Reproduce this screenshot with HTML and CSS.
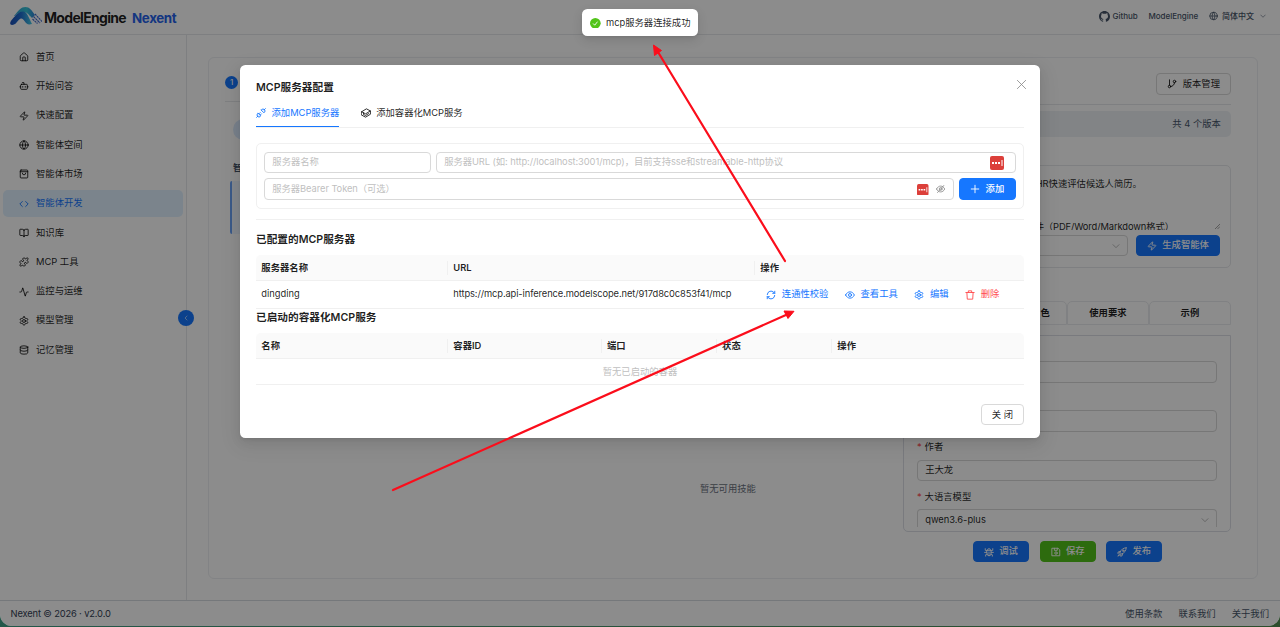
FILE: index.html
```html
<!DOCTYPE html>
<html lang="zh-CN">
  <head>
    <meta charset="UTF-8" />
    <title>Nexent</title>
    <link rel="stylesheet" href="styles.css">
  </head>
  <body>
    <!-- Icon sprite -->
    <svg class="sprite">
      <symbol id="home" viewBox="0 0 24 24"><path d="M15 21v-8a1 1 0 0 0-1-1h-4a1 1 0 0 0-1 1v8"/><path d="M3 10a2 2 0 0 1 .7-1.5l7-6a2 2 0 0 1 2.6 0l7 6A2 2 0 0 1 21 10v9a2 2 0 0 1-2 2H5a2 2 0 0 1-2-2z"/></symbol>
      <symbol id="bot" viewBox="0 0 24 24"><path d="M12 8V4H8M2 14h2M20 14h2M15 13v2M9 13v2"/><rect x="4" y="8" width="16" height="12" rx="2"/></symbol>
      <symbol id="zap" viewBox="0 0 24 24"><path d="M4 14a1 1 0 0 1-.8-1.6l9.900-10.200a.5.5 0 0 1 .9.5l-2 6A1 1 0 0 0 13 10h7a1 1 0 0 1 .8 1.600l-9.900 10.200a.5.5 0 0 1-.9-.5l2-6A1 1 0 0 0 11 14z"/></symbol>
      <symbol id="globe" viewBox="0 0 24 24"><circle cx="12" cy="12" r="10"/><path d="M12 2a14.5 14.5 0 0 0 0 20 14.5 14.5 0 0 0 0-20M2 12h20"/></symbol>
      <symbol id="bag" viewBox="0 0 24 24"><rect x="3" y="2.5" width="18" height="19" rx="2"/><path d="M3 6.5h18M16 10a4 4 0 0 1-8 0"/></symbol>
      <symbol id="code" viewBox="0 0 24 24"><path d="m16 18 6-6-6-6M8 6l-6 6 6 6"/></symbol>
      <symbol id="book" viewBox="0 0 24 24"><path d="M12 7v14M3 18a1 1 0 0 1-1-1V4a1 1 0 0 1 1-1h5a4 4 0 0 1 4 4 4 4 0 0 1 4-4h5a1 1 0 0 1 1 1v13a1 1 0 0 1-1 1h-6a3 3 0 0 0-3 3 3 3 0 0 0-3-3z"/></symbol>
      <symbol id="puzzle" viewBox="0 0 24 24"><path d="M15.39 4.39a1 1 0 0 0 1.68-.474 2.5 2.5 0 1 1 3.014 3.015 1 1 0 0 0-.474 1.68l1.683 1.682a2.414 2.414 0 0 1 0 3.414L19.61 15.39a1 1 0 0 1-1.68-.474 2.5 2.5 0 1 0-3.014 3.015 1 1 0 0 1 .474 1.68l-1.683 1.682a2.414 2.414 0 0 1-3.414 0L8.61 19.61a1 1 0 0 0-1.68.474 2.5 2.5 0 1 1-3.014-3.015 1 1 0 0 0 .474-1.68l-1.683-1.682a2.414 2.414 0 0 1 0-3.414L4.39 8.61a1 1 0 0 1 1.68.474 2.5 2.5 0 1 0 3.014-3.015 1 1 0 0 1-.474-1.68l1.683-1.682a2.414 2.414 0 0 1 3.414 0z"/></symbol>
      <symbol id="activity" viewBox="0 0 24 24"><path d="M22 12h-2.500a2 2 0 0 0-1.900 1.500l-2.400 8.300a.25.25 0 0 1-.4 0L9.200 2.200a.25.25 0 0 0-.4 0l-2.400 8.300A2 2 0 0 1 4.500 12H2"/></symbol>
      <symbol id="settings" viewBox="0 0 24 24"><path d="M12.22 2h-.44a2 2 0 0 0-2 2v.18a2 2 0 0 1-1 1.73l-.43.25a2 2 0 0 1-2 0l-.15-.08a2 2 0 0 0-2.73.73l-.22.38a2 2 0 0 0 .73 2.73l.15.1a2 2 0 0 1 1 1.72v.51a2 2 0 0 1-1 1.74l-.15.09a2 2 0 0 0-.73 2.73l.22.38a2 2 0 0 0 2.73.73l.15-.08a2 2 0 0 1 2 0l.43.25a2 2 0 0 1 1 1.73V20a2 2 0 0 0 2 2h.44a2 2 0 0 0 2-2v-.18a2 2 0 0 1 1-1.73l.43-.25a2 2 0 0 1 2 0l.15.08a2 2 0 0 0 2.73-.73l.22-.39a2 2 0 0 0-.73-2.73l-.15-.08a2 2 0 0 1-1-1.74v-.5a2 2 0 0 1 1-1.74l.15-.09a2 2 0 0 0 .73-2.73l-.22-.38a2 2 0 0 0-2.73-.73l-.15.08a2 2 0 0 1-2 0l-.43-.25a2 2 0 0 1-1-1.73V4a2 2 0 0 0-2-2z"/><circle cx="12" cy="12" r="3.5"/></symbol>
      <symbol id="database" viewBox="0 0 24 24"><ellipse cx="12" cy="5" rx="9" ry="3"/><path d="M3 5v14a9 3 0 0 0 18 0V5M3 12a9 3 0 0 0 18 0"/></symbol>
      <symbol id="github" viewBox="0 0 16 16"><path d="M8 0C3.58 0 0 3.58 0 8c0 3.54 2.29 6.53 5.47 7.59.4.07.55-.17.55-.38 0-.19-.01-.82-.01-1.49-2.01.37-2.53-.49-2.69-.94-.09-.23-.48-.94-.82-1.13-.28-.15-.68-.52-.01-.53.63-.01 1.08.58 1.23.82.72 1.21 1.87.87 2.33.66.07-.52.28-.87.51-1.07-1.78-.2-3.64-.89-3.64-3.95 0-.87.31-1.59.82-2.15-.08-.2-.36-1.02.08-2.12 0 0 .67-.21 2.2.82.64-.18 1.32-.27 2-.27s1.36.09 2 .27c1.53-1.04 2.2-.82 2.2-.82.44 1.1.16 1.92.08 2.12.51.56.82 1.27.82 2.15 0 3.07-1.87 3.75-3.65 3.95.29.25.54.73.54 1.48 0 1.07-.01 1.93-.01 2.2 0 .21.15.46.55.38A8.01 8.01 0 0 0 16 8c0-4.42-3.58-8-8-8z" fill="currentColor" stroke="none"/></symbol>
      <symbol id="down" viewBox="0 0 24 24"><path d="m3 8 9 9 9-9"/></symbol>
      <symbol id="left" viewBox="0 0 24 24"><path d="m16 4-8 8 8 8"/></symbol>
      <symbol id="close" viewBox="0 0 24 24"><path d="m3 3 18 18M21 3 3 21"/></symbol>
      <symbol id="plus" viewBox="0 0 24 24"><path d="M12 3v18M3 12h18"/></symbol>
      <symbol id="branch" viewBox="0 0 24 24"><path d="M6 2v13M18 9a9 9 0 0 1-9 9"/><circle cx="6" cy="18" r="3"/><circle cx="18" cy="6" r="3"/></symbol>
      <symbol id="plug" viewBox="0 0 24 24"><path d="m1.500 22.500 3-3M22.500 1.500l-3 3M10 11l-2.500 2.500M13 14l-2.500 2.500M5 12.500l6.500 6.500-1.500 1.500a4 4 0 0 1-5.500 0l-1-1a4 4 0 0 1 0-5.500zM12.500 5l6.500 6.500 1.500-1.500a4 4 0 0 0 0-5.500l-1-1a4 4 0 0 0-5.500 0z"/></symbol>
      <symbol id="box" viewBox="0 0 24 24"><path d="M1.500 9 13 2l9.500 5v8L11 22l-9.500-5zM1.500 9 11 14l11.500-7M6 11.500v4l5 2.500 7-4.500"/></symbol>
      <symbol id="sync" viewBox="0 0 24 24"><path d="M3 11a9 9 0 0 1 16-5l2 2M21 3v5h-5M21 13a9 9 0 0 1-16 5l-2-2M3 21v-5h5"/></symbol>
      <symbol id="eye" viewBox="0 0 24 24"><path d="M1.500 12C4 7 7.500 4.500 12 4.500S20 7 22.500 12C20 17 16.500 19.500 12 19.500S4 17 1.500 12z"/><circle cx="12" cy="12" r="3.6"/></symbol>
      <symbol id="eye-off" viewBox="0 0 24 24"><path d="M1.500 12C4 7 7.500 4.500 12 4.500S20 7 22.500 12C20 17 16.500 19.500 12 19.500S4 17 1.500 12zM4 21 20 3"/><circle cx="12" cy="12" r="3.6"/></symbol>
      <symbol id="trash" viewBox="0 0 24 24"><path d="M2 6h20M8 6V2h8v4M4.500 6l1 16h13l1-16"/></symbol>
      <symbol id="bug" viewBox="0 0 24 24"><path d="M7 8h10v8a5 5 0 0 1-10 0zM8 8a4 4 0 0 1 8 0M12 12v9M7 13H1.500M22.500 13H17M7 9 3 8V4M17 9l4-1V4M7.500 17 4 18.500V22M16.500 17l3.500 1.500V22"/></symbol>
      <symbol id="save" viewBox="0 0 24 24"><path d="M3 3h14l4 4v14H3zM8 3v5h7V3"/><circle cx="12" cy="14.5" r="3"/></symbol>
      <symbol id="rocket" viewBox="0 0 24 24"><path d="M22 2C15 2 10 6 7 13l4 4c7-3 11-8 11-15zM8 11H4l-2.500 4L7 14M13 16v4l-4 2.500V18M6 17l-4 5 5-3"/><circle cx="15" cy="9" r="1.8"/></symbol>
    </svg>

    <div class="window">
      <header class="topbar">
        <div class="brand">
          <svg class="logo" viewBox="0 0 32 19">
            <defs>
              <linearGradient id="sky"><stop offset="0" stop-color="#2f9fd0"/><stop offset=".6" stop-color="#35c4d8"/><stop offset="1" stop-color="#2f7fd8"/></linearGradient>
              <linearGradient id="sea"><stop offset="0" stop-color="#1d4fb8"/><stop offset=".5" stop-color="#1f6fd0"/><stop offset="1" stop-color="#45cbe6"/></linearGradient>
            </defs>
            <path d="M4 9C9 3 11 0 15.500 0c4 0 6 3 9.500 8l-3 3C18 7 17 5 13 5c-3 0-5 1-8 4z" fill="url(#sky)"/>
            <path d="M2.500 12C6 8 9 4.500 13 4.500c4 0 6 6.500 9 12.500-4 1-5.500 0-7.500-3-1.500-2-2.500-3-4.500-2-3 2-4 6-8 6-2 0-3-2 .5-6z" fill="url(#sea)"/>
            <path d="m25 7 7 7.500M23.500 9.500l6.500 6.500M22.500 12l5 4.500" stroke="#3d67c8" stroke-width="1.100" stroke-dasharray="2.200 .6"/>
          </svg>
          <span class="brand-name">ModelEngine</span>
          <span class="product">Nexent</span>
        </div>
        <nav class="top-links">
          <a class="github"><svg class="icon big"><use href="#github"/></svg>Github</a>
          <a>ModelEngine</a>
          <a class="lang"><svg class="icon"><use href="#globe"/></svg>简体中文<svg class="icon tiny"><use href="#down"/></svg></a>
        </nav>
      </header>

      <div class="main">
        <aside class="sidebar">
          <a class="menu-item"><svg class="icon"><use href="#home"/></svg>首页</a>
          <a class="menu-item"><svg class="icon"><use href="#bot"/></svg>开始问答</a>
          <a class="menu-item"><svg class="icon"><use href="#zap"/></svg>快速配置</a>
          <a class="menu-item"><svg class="icon"><use href="#globe"/></svg>智能体空间</a>
          <a class="menu-item"><svg class="icon"><use href="#bag"/></svg>智能体市场</a>
          <a class="menu-item active"><svg class="icon"><use href="#code"/></svg>智能体开发</a>
          <a class="menu-item"><svg class="icon"><use href="#book"/></svg>知识库</a>
          <a class="menu-item"><svg class="icon"><use href="#puzzle"/></svg>MCP 工具</a>
          <a class="menu-item"><svg class="icon"><use href="#activity"/></svg>监控与运维</a>
          <a class="menu-item"><svg class="icon"><use href="#settings"/></svg>模型管理</a>
          <a class="menu-item"><svg class="icon"><use href="#database"/></svg>记忆管理</a>
          <span class="collapse"><svg class="icon tiny"><use href="#left"/></svg></span>
        </aside>

        <div class="workspace">
          <section class="agents">
            <div class="step"><span class="step-no">1</span></div>
            <div class="avatar"></div>
            <div class="agents-title">智能体</div>
            <div class="agent-row"></div>
          </section>

          <section class="skills">暂无可用技能</section>

          <section class="detail">
            <div class="detail-head">
              <button class="btn"><svg class="icon"><use href="#branch"/></svg>版本管理</button>
            </div>
            <div class="versions">共 4 个版本</div>
            <div class="prompt">
              <div class="prompt-text">
                <p>帮助HR快速评估候选人简历。</p>
                <p>支持文件（PDF/Word/Markdown格式）</p>
                <svg class="grip" viewBox="0 0 6 6"><path d="M0 6 6 0M3 6l3-3"/></svg>
              </div>
              <div class="prompt-actions">
                <div class="field select"><svg class="icon"><use href="#down"/></svg></div>
                <button class="btn primary"><svg class="icon"><use href="#zap"/></svg>生成智能体</button>
              </div>
            </div>
            <div class="detail-tabs">
              <span>基础信息</span><span class="role">角色</span><span>使用要求</span><span>示例</span>
            </div>
            <div class="detail-form">
              <div class="field first"></div>
              <div class="field second"></div>
              <label><i>*</i>作者</label>
              <div class="field">王大龙</div>
              <label><i>*</i>大语言模型</label>
              <div class="field select">qwen3.6-plus<svg class="icon"><use href="#down"/></svg></div>
            </div>
            <div class="detail-actions">
              <button class="btn primary"><svg class="icon"><use href="#bug"/></svg>调试</button>
              <button class="btn success"><svg class="icon"><use href="#save"/></svg>保存</button>
              <button class="btn primary"><svg class="icon"><use href="#rocket"/></svg>发布</button>
            </div>
          </section>
        </div>
      </div>

      <footer class="footer">
        <span class="version">Nexent © 2026 · v2.0.0</span>
        <nav><a>使用条款</a><a>联系我们</a><a>关于我们</a></nav>
      </footer>
      <div class="mask"></div>
    </div>

    <!-- MCP config dialog -->
    <div class="modal">
      <div class="modal-head"><span>MCP服务器配置</span><svg class="icon close"><use href="#close"/></svg></div>
      <div class="tabs">
        <a class="tab on"><svg class="icon"><use href="#plug"/></svg>添加MCP服务器</a>
        <a class="tab"><svg class="icon"><use href="#box"/></svg>添加容器化MCP服务</a>
      </div>
      <div class="add-form">
        <div class="form-row">
          <div class="field name">服务器名称</div>
          <div class="field url">服务器URL (如: http://localhost:3001/mcp)，目前支持sse和streamable-http协议
            <svg class="pass" viewBox="0 0 14 14"><rect width="14" height="14" rx="2"/><path d="M2 6h2v2H2zM5 6h2v2H5zM8 6h2v2H8zM11.500 4h1v6h-1z"/></svg>
          </div>
        </div>
        <div class="form-row">
          <div class="field token">服务器Bearer Token（可选）
            <svg class="pass small" viewBox="0 0 14 14"><rect width="14" height="14" rx="2"/><path d="M2 6h2v2H2zM5 6h2v2H5zM8 6h2v2H8zM11.500 4h1v6h-1z"/></svg>
            <svg class="icon"><use href="#eye-off"/></svg>
          </div>
          <button class="btn primary"><svg class="icon"><use href="#plus"/></svg>添加</button>
        </div>
      </div>

      <h3 class="servers-title">已配置的MCP服务器</h3>
      <div class="grid servers thead"><span>服务器名称</span><span>URL</span><span>操作</span></div>
      <div class="grid servers row">
        <span>dingding</span>
        <span class="link">https://mcp.api-inference.modelscope.net/917d8c0c853f41/mcp</span>
        <div class="actions">
          <a><svg class="icon"><use href="#sync"/></svg>连通性校验</a>
          <a><svg class="icon"><use href="#eye"/></svg>查看工具</a>
          <a><svg class="icon"><use href="#settings"/></svg>编辑</a>
          <a class="danger"><svg class="icon"><use href="#trash"/></svg>删除</a>
        </div>
      </div>

      <h3 class="containers-title">已启动的容器化MCP服务</h3>
      <div class="grid containers thead"><span>名称</span><span>容器ID</span><span>端口</span><span>状态</span><span>操作</span></div>
      <div class="empty">暂无已启动的容器</div>
      <div class="modal-foot"><button class="btn">关 闭</button></div>
    </div>

    <div class="toast">
      <svg viewBox="0 0 12 12"><circle cx="6" cy="6" r="6"/><path d="m3.500 6.200 1.800 1.900 3.200-4"/></svg>mcp服务器连接成功
    </div>

    <!-- Annotation arrows -->
    <svg class="arrows" viewBox="0 0 1280 627">
      <path class="shaft" d="M785 261 658 52M393 490 787 314.500"/>
      <path class="head" d="m653.500 45 8 5.500-7 5zM794 311.300l-10-.3 4 7.500z"/>
    </svg>
  </body>
</html>
```

FILE: styles.css
```css
* {
  box-sizing: border-box;
}

body {
  margin: 0;
  height: 627px;
  overflow: hidden;
  font-family: Inter, "Noto Sans CJK SC", sans-serif;
  font-size: 9.33px;
  line-height: 14.67px;
  color: rgba(0, 0, 0, 0.88);
  background: linear-gradient(90deg, #23584a, #2c4d2c);
}

.sprite {
  display: none;
}

.icon {
  width: 10px;
  height: 10px;
  flex: none;
  fill: none;
  stroke: currentColor;
  stroke-width: 2.2;
  stroke-linecap: round;
  stroke-linejoin: round;
}

.icon.big {
  width: 11px;
  height: 11px;
}

.icon.tiny {
  width: 6px;
  height: 6px;
}

h3,
p {
  margin: 0;
}

.window {
  position: relative;
  height: 626px;
  display: flex;
  flex-direction: column;
  background: #fff;
  border-radius: 0 0 12px 12px;
  overflow: hidden;
}

/* Covers the whole app window while the dialog is open */
.mask {
  position: absolute;
  inset: 0;
  background: rgba(0, 0, 0, 0.45);
}

/* Top bar */
.topbar {
  height: 35px;
  flex: none;
  display: flex;
  justify-content: space-between;
  align-items: center;
  padding: 0 14px 1px 10px;
  border-bottom: 1px solid #e5e7eb;
}

.brand {
  display: flex;
  align-items: center;
}

.logo {
  width: 32px;
  height: 19px;
  fill: none;
  margin-bottom: 1px;
}

.brand-name {
  font-size: 14px;
  font-weight: 700;
  letter-spacing: -0.68px;
  margin: 3px 6px 0 2px;
}

.product {
  font-size: 13.33px;
  font-weight: 700;
  color: #2563eb;
  letter-spacing: -0.35px;
  margin-top: 3px;
}

.top-links {
  display: flex;
  gap: 10.7px;
  font-size: 8px;
  font-weight: 500;
  color: #475569;
}

.top-links a {
  display: flex;
  align-items: center;
  gap: 2px;
}

.top-links .lang {
  gap: 4px;
}

.top-links .lang .icon:first-child {
  width: 9px;
}

.top-links .lang .tiny {
  margin-left: 2px;
}

/* Sidebar */
.main {
  height: 565px;
  display: flex;
}

.sidebar {
  position: relative;
  width: 187px;
  flex: none;
  padding: 8.7px 3px 0;
  border-right: 1px solid #e5e7eb;
}

.menu-item {
  height: 26.67px;
  margin-bottom: 2.67px;
  padding-left: 16px;
  display: flex;
  align-items: center;
  gap: 7px;
  border-radius: 5px;
}

.menu-item.active {
  color: #1677ff;
  background: #e0f1ff;
}

.collapse {
  position: absolute;
  right: -8px;
  top: 275px;
  width: 16px;
  height: 16px;
  display: flex;
  align-items: center;
  justify-content: center;
  border-radius: 50%;
  background: #1677ff;
  color: #fff;
}

/* Workspace card */
.workspace {
  width: 1050px;
  height: 522px;
  margin: 22px 0 0 21.4px;
  display: flex;
  border: 1px solid #edeff2;
  border-radius: 6px;
}

.agents {
  width: 240px;
  padding: 18px 0 0 15.6px;
}

.step {
  height: 26px;
  border-bottom: 1px solid #e5e7eb;
}

.step-no {
  display: block;
  width: 13.33px;
  height: 13.33px;
  line-height: 13.33px;
  border-radius: 50%;
  text-align: center;
  font-size: 8px;
  font-weight: 500;
  color: #fff;
  background: #1677ff;
}

.avatar {
  width: 21px;
  height: 21px;
  margin: 16.5px 0 0 8px;
  border-radius: 50%;
  background: #dbeafe;
}

.agents-title {
  margin: 21px 0 0 8px;
  font-weight: 600;
  color: #475569;
}

.agent-row {
  height: 53px;
  margin: 6px 0 0 5px;
  border-left: 2.67px solid #6ba3f8;
  border-radius: 2px;
  background: #eff6ff;
}

.skills {
  flex: 1;
  padding: 424px 98px 0 0;
  text-align: right;
  color: #6b7280;
  margin-right: 49px;
}

/* Agent detail column */
.detail {
  width: 328px;
  margin-right: 26.5px;
  padding-top: 15.3px;
}

.detail-head {
  height: 32px;
  display: flex;
  justify-content: flex-end;
  border-bottom: 1px solid #e5e7eb;
}

.detail-head .btn {
  width: 74.5px;
}

.btn {
  height: 21.5px;
  padding: 0;
  display: inline-flex;
  align-items: center;
  justify-content: center;
  gap: 5.33px;
  font: inherit;
  line-height: 14.67px;
  white-space: nowrap;
  color: inherit;
  background: #fff;
  border: 1px solid #d9d9d9;
  border-radius: 4px;
}

.btn.primary,
.btn.success {
  color: #fff;
  font-weight: 500;
  background: #1677ff;
  border-color: #1677ff;
}

.btn.success {
  background: #52c41a;
  border-color: #52c41a;
}

.versions {
  height: 25.5px;
  margin-top: 6px;
  padding: 5.5px 10px;
  text-align: right;
  color: #475569;
  background: #edf1f5;
  border-radius: 5px;
}

.prompt {
  height: 103px;
  margin-top: 28px;
  padding: 5px 10px;
  border: 1px solid #e5e7eb;
  border-radius: 5px;
}

.prompt-text {
  position: relative;
  height: 59px;
  padding-top: 6px;
  overflow: hidden;
}

.prompt-text p {
  width: 228px;
  text-align: right;
}

.prompt-text p + p {
  width: 260px;
  margin-top: 28.5px;
  letter-spacing: -0.1px;
}

.grip {
  position: absolute;
  right: 0;
  bottom: 1px;
  width: 5px;
  height: 5px;
  stroke: #777;
  stroke-width: 0.8;
}

.prompt-actions {
  display: flex;
  gap: 8px;
  margin-top: 5px;
}

.prompt-actions .field {
  flex: 1;
}

.prompt-actions .btn {
  width: 84px;
}

.field {
  height: 21.5px;
  padding: 0 7.3px;
  display: flex;
  align-items: center;
  border: 1px solid #d9d9d9;
  border-radius: 4px;
  white-space: nowrap;
}

.select .icon {
  width: 8px;
  height: 8px;
  margin-left: auto;
  stroke-width: 1.8;
  color: #8c8c8c;
}

.detail-tabs {
  height: 24px;
  margin-top: 33px;
  display: grid;
  grid-template-columns: repeat(4, 1fr);
}

.detail-tabs span {
  padding-top: 4px;
  text-align: center;
  font-weight: 700;
  border: 1px solid #e9ebee;
  border-radius: 5px 5px 0 0;
}

.detail-tabs .role {
  padding-left: 29px;
}

.detail-form {
  height: 197.5px;
  margin-top: 10px;
  padding: 0 13px 5px;
  display: flow-root;
  border: 1px solid #dcdfe6;
  border-radius: 0 0 5px 5px;
}

.detail-form .first {
  margin-top: 25.5px;
}

.detail-form .second {
  margin: 27.5px 0 8px;
}

.detail-form label {
  display: block;
  margin: 8.4px 0 5px;
}

.detail-form label i {
  color: #ff4d4f;
  font-style: normal;
  margin-right: 3px;
}

.detail-form .field:last-child {
  height: 18px;
  padding-top: 3px;
  border-bottom: 0;
  border-radius: 4px 4px 0 0;
}

.detail-actions {
  display: flex;
  gap: 10.67px;
  margin: 8.5px 0 0 70px;
}

.detail-actions .btn {
  width: 56px;
}

/* Footer */
.footer {
  flex: 1;
  padding: 1.5px 11px 0 10.5px;
  display: flex;
  justify-content: space-between;
  align-items: center;
  border-top: 1px solid #d6dae0;
  color: #334155;
}

.version {
  letter-spacing: -0.14px;
}

.footer nav {
  display: flex;
  gap: 16px;
  color: #475569;
}

/* Dialog */
.modal {
  position: absolute;
  left: 240px;
  top: 65px;
  width: 800px;
  height: 373px;
  padding: 14px 16px;
  background: #fff;
  border-radius: 5.33px;
  box-shadow: 0 4px 11px rgba(0, 0, 0, 0.08), 0 2px 4px -2px rgba(0, 0, 0, 0.12), 0 6px 19px 5px rgba(0, 0, 0, 0.05);
}

.modal-head {
  height: 16px;
  display: flex;
  justify-content: space-between;
  font-size: 10.67px;
  font-weight: 600;
  line-height: 17px;
}

.close {
  width: 11px;
  height: 11px;
  margin: -0.5px -3px 0 0;
  stroke-width: 1.8;
  color: #888;
}

.tabs {
  height: 32.5px;
  display: flex;
  gap: 21.33px;
  border-bottom: 1px solid #f0f0f0;
}

.tab {
  display: flex;
  align-items: center;
  gap: 5.5px;
  padding-top: 5px;
}

.tab.on {
  position: relative;
  color: #1677ff;
}

/* Ink bar over the tab border */
.tab.on::after {
  content: "";
  position: absolute;
  left: 0;
  right: 0;
  bottom: -0.5px;
  height: 1.5px;
  background: #1677ff;
}

.add-form {
  height: 66px;
  margin-top: 15.5px;
  padding: 7.5px 7.5px 0 7px;
  border: 1px solid #f0f0f0;
  border-radius: 5px;
}

.form-row {
  display: flex;
  gap: 5.33px;
  margin-bottom: 5px;
}

.add-form .field {
  padding-top: 1px;
  color: #bfbfbf;
}

.add-form .name {
  width: 166.5px;
}

.add-form .url,
.add-form .token {
  flex: 1;
  letter-spacing: -0.07px;
}

.pass {
  width: 14px;
  height: 14px;
  margin: 0 3px 0 auto;
  fill: #dc3f3a;
}

.pass path {
  fill: #fff;
}

.pass.small {
  width: 11.5px;
  height: 11.5px;
  margin-right: 7.5px;
}

.token .icon {
  width: 9.33px;
  color: #8c8c8c;
}

.form-row .btn {
  width: 56.5px;
  padding-top: 1px;
}

h3 {
  font-size: 10.67px;
  font-weight: 600;
  line-height: 16px;
}

.servers-title {
  margin-top: 10px;
  padding: 12px 0 7px;
  border-top: 1px solid #f0f0f0;
}

.containers-title {
  padding: 1.5px 0 7px;
}

.grid {
  display: grid;
  align-items: center;
  border-bottom: 1px solid #f0f0f0;
}

.servers {
  grid-template-columns: 192px 307px 1fr;
}

.containers {
  grid-template-columns: 192px 153.6px 115.2px 115.2px 1fr;
}

.grid span {
  padding-left: 5.33px;
  white-space: nowrap;
}

.grid .link {
  letter-spacing: -0.1px;
}

.thead {
  height: 25.7px;
  padding-top: 1px;
  background: #fafafa;
  border-radius: 5px 5px 0 0;
  font-weight: 600;
}

.thead span:not(:last-child) {
  border-right: 1px solid #f0f0f0;
}

.row {
  height: 28px;
  padding-top: 1px;
}

.actions {
  display: flex;
  gap: 16.3px;
  padding-left: 11px;
  color: #1677ff;
}

.actions a {
  display: flex;
  align-items: center;
  gap: 5.8px;
}

.actions .danger {
  color: #ff4d4f;
}

.empty {
  height: 26px;
  padding-top: 6.5px;
  text-align: center;
  color: #bfbfbf;
  border-bottom: 1px solid #f0f0f0;
}

.modal-foot {
  display: flex;
  justify-content: flex-end;
  margin-top: 19px;
}

.modal-foot .btn {
  width: 43px;
  padding-top: 1px;
}

/* Success message */
.toast {
  position: absolute;
  left: 582px;
  top: 9px;
  width: 116px;
  height: 27px;
  padding: 1px 0 0 8px;
  display: flex;
  align-items: center;
  gap: 5.33px;
  background: #fff;
  border-radius: 5.33px;
  box-shadow: 0 4px 11px rgba(0, 0, 0, 0.12), 0 2px 4px -2px rgba(0, 0, 0, 0.12);
  white-space: nowrap;
}

.toast svg {
  width: 10.67px;
  height: 10.67px;
  fill: #52c41a;
}

.toast path {
  fill: none;
  stroke: #fff;
}

.arrows {
  position: absolute;
  inset: 0;
  width: 1280px;
  height: 627px;
  pointer-events: none;
}

.shaft {
  fill: none;
  stroke: #fb0d1b;
  stroke-width: 2.2;
  stroke-linecap: round;
}

.head {
  fill: #fb0d1b;
  stroke: #fb0d1b;
  stroke-linejoin: round;
}
```
